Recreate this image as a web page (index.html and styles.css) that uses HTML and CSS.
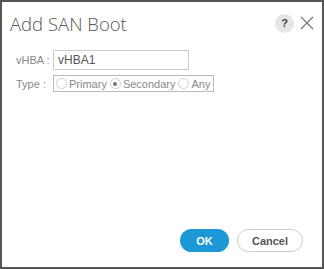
FILE: index.html
```html
<!DOCTYPE html>
<html lang="en">
<head>
    <meta charset="UTF-8">
    <title>Add SAN Boot</title>
    <link rel="stylesheet" href="styles.css">
</head>
<body>
    <div class="dialog">
        <div class="dialog-header">
            <h1>Add SAN Boot</h1>
            <div class="header-tools">
                <span class="help">?</span>
                <svg class="close" width="14" height="14" viewBox="0 0 14 14">
                    <path d="M1 1 L13 13 M13 1 L1 13" stroke="#777" stroke-width="1.2" fill="none"/>
                </svg>
            </div>
        </div>

        <div class="dialog-body">
            <div class="row">
                <label class="field-label">vHBA :</label>
                <input class="text-input" type="text" value="vHBA1">
            </div>
            <div class="row">
                <label class="field-label">Type :</label>
                <div class="radio-group">
                    <span class="radio"><span class="dot"></span>Primary</span>
                    <span class="radio checked"><span class="dot"></span>Secondary</span>
                    <span class="radio"><span class="dot"></span>Any</span>
                </div>
            </div>
        </div>

        <div class="dialog-footer">
            <button class="btn btn-ok">OK</button>
            <button class="btn btn-cancel">Cancel</button>
        </div>
    </div>
</body>
</html>
```

FILE: styles.css
```css
body {
    margin: 0;
    padding: 0;
    background-color: #fff;
    font-family: "Liberation Sans", Arial, sans-serif;
}

.dialog {
    width: 324px;
    height: 269px;
    box-sizing: border-box;
    border: 2px solid #555;
    background-color: #fff;
    display: flex;
    flex-direction: column;
}

.dialog-header {
    display: flex;
    align-items: center;
    justify-content: space-between;
    padding: 6px 8px 0 8px;
    height: 30px;
}

.dialog-header h1 {
    margin: 0;
    font-family: "Open Sans", "Liberation Sans", sans-serif;
    font-size: 18.5px;
    font-weight: 300;
    color: #555;
}

.header-tools {
    display: flex;
    align-items: center;
    gap: 6px;
}

.help {
    width: 19px;
    height: 19px;
    border-radius: 50%;
    background-color: #e6e6e6;
    color: #444;
    font-size: 11px;
    font-weight: bold;
    display: flex;
    align-items: center;
    justify-content: center;
}

.dialog-body {
    flex: 1;
    padding: 12px 0 0 14px;
}

.row {
    display: flex;
    align-items: center;
    margin-bottom: 5px;
}

.field-label {
    width: 37px;
    font-size: 11px;
    color: #888;
}

.text-input {
    width: 136px;
    height: 20px;
    box-sizing: border-box;
    border: 1px solid #ccc;
    padding: 0 4px;
    font-family: inherit;
    font-size: 12px;
    color: #555;
    outline: none;
}

.radio-group {
    display: flex;
    align-items: center;
    gap: 3px;
    border: 1px solid #bbb;
    height: 17px;
    box-sizing: border-box;
    padding: 0 3px 0 2px;
    font-size: 11px;
    color: #888;
}

.radio {
    display: flex;
    align-items: center;
    gap: 2px;
}

.dot {
    width: 11px;
    height: 11px;
    border-radius: 50%;
    border: 1px solid #d0d0d0;
    box-sizing: border-box;
    display: flex;
    align-items: center;
    justify-content: center;
}

.radio.checked .dot::after {
    content: "";
    width: 4px;
    height: 4px;
    border-radius: 50%;
    background-color: #777;
}

.dialog-footer {
    display: flex;
    justify-content: flex-end;
    gap: 8px;
    padding: 0 19px 15px 0;
}

.btn {
    height: 23px;
    border-radius: 12px;
    font-family: inherit;
    font-size: 11px;
    font-weight: bold;
    cursor: pointer;
}

.btn-ok {
    width: 49px;
    background-color: #1b98d5;
    border: none;
    color: #fff;
}

.btn-cancel {
    width: 66px;
    background-color: #fff;
    border: 1px solid #ccc;
    color: #555;
}
```
